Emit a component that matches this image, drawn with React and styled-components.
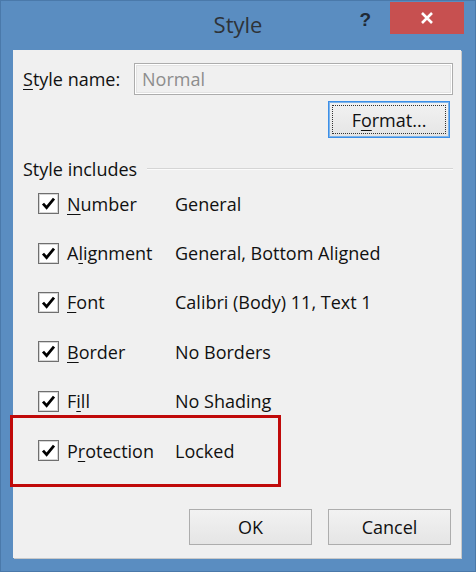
import React from "react";
import styled, { createGlobalStyle } from "styled-components";

const Global = createGlobalStyle`
  html, body { margin: 0; padding: 0; background: #5b8ec2; }
  body { font-family: "Open Sans", "Noto Sans", sans-serif; }
`;

const Window = styled.div`
  position: relative;
  width: 476px;
  height: 572px;
  box-sizing: border-box;
  background: #5a8dc1;
  border: 1px solid #4a79aa;
  display: flex;
  flex-direction: column;
`;

const TitleBar = styled.div`
  height: 49px;
  display: grid;
  grid-template-columns: 1fr auto 1fr;
  align-items: start;
`;

const Title = styled.div`
  grid-column: 2;
  margin-top: 8px;
  font-size: 22px;
  color: #2e3338;
  line-height: 30px;
`;

const Controls = styled.div`
  grid-column: 3;
  display: flex;
  justify-content: flex-end;
  align-items: flex-start;
  padding-right: 11px;
`;

const Help = styled.div`
  font-family: "Liberation Sans", Arial, sans-serif;
  font-weight: bold;
  font-size: 19px;
  color: #1f2a36;
  margin-top: 8px;
  margin-right: 19px;
`;

const Close = styled.div`
  width: 74px;
  height: 32px;
  margin-top: 1px;
  background: #c75050;
  display: flex;
  align-items: center;
  justify-content: center;
`;

const Client = styled.div`
  flex: 1;
  margin: 0 14px 13px 12px;
  background: #f0f0f0;
  box-shadow: 1px 1px 0 #c9c9c9;
  display: flex;
  flex-direction: column;
  padding: 13px 8px 0 10px;
  font-size: 18px;
  line-height: 24px;
  color: #111;
`;

const NameRow = styled.div`
  display: flex;
  align-items: center;
  gap: 15px;
`;

const Label = styled.span`
  width: 96px;
  white-space: nowrap;
`;

const Mn = styled.span`
  text-decoration: underline;
  text-underline-offset: 3px;
`;

const Input = styled.div`
  flex: 1;
  height: 32px;
  box-sizing: border-box;
  border: 1px solid #acacac;
  box-shadow: inset 0 0 0 1px #ffffff, inset 0 0 0 2px #e3e3e3;
  background: #f0f0f0;
  display: flex;
  align-items: center;
  padding-left: 7px;
  color: #8d8d8d;
`;

const FormatRow = styled.div`
  display: flex;
  justify-content: flex-end;
  margin-top: 6px;
  padding-right: 3px;
`;

const Button = styled.div`
  width: ${(p) => p.$w}px;
  height: ${(p) => p.$h}px;
  box-sizing: border-box;
  border: 1px solid ${(p) => (p.$focus ? "#3c8fe8" : "#adadad")};
  box-shadow: ${(p) => (p.$focus ? "inset 0 0 0 1px #7eb4ea" : "none")};
  background: linear-gradient(#f2f2f2, #e5e5e5);
  display: flex;
  align-items: center;
  justify-content: center;
  padding: 3px;
`;

const FocusRect = styled.div`
  flex: 1;
  align-self: stretch;
  border: 1px dotted #333;
  display: flex;
  align-items: center;
  justify-content: center;
`;

const Section = styled.div`
  display: flex;
  align-items: center;
  gap: 10px;
  margin-top: 19px;
  height: 24px;
`;

const Rule = styled.div`
  flex: 1;
  height: 1px;
  background: #d5d5d5;
  border-bottom: 1px solid #fbfbfb;
`;

const List = styled.div`
  display: grid;
  grid-auto-rows: 49.4px;
  padding-left: 15px;
  margin-top: -2px;
`;

const Item = styled.div`
  display: grid;
  grid-template-columns: 21px 100px auto;
  column-gap: 8px;
  align-items: center;
`;

const Box = styled.div`
  width: 21px;
  height: 21px;
  box-sizing: border-box;
  border: 1px solid #6f6f6f;
  box-shadow: inset 0 0 0 1px #d6d6d6;
  background: #fff;
  display: flex;
  align-items: center;
  justify-content: center;
`;

const Footer = styled.div`
  margin-top: auto;
  display: flex;
  justify-content: flex-end;
  gap: 16px;
  padding: 0 2px 13px 0;
`;

const Highlight = styled.div`
  position: absolute;
  left: 9px;
  top: 414px;
  width: 271px;
  height: 72px;
  box-sizing: border-box;
  border: 3px solid #c00a0a;
  pointer-events: none;
`;

const rows = [
  { pre: "", mn: "N", post: "umber", value: "General" },
  { pre: "A", mn: "l", post: "ignment", value: "General, Bottom Aligned" },
  { pre: "", mn: "F", post: "ont", value: "Calibri (Body) 11, Text 1" },
  { pre: "", mn: "B", post: "order", value: "No Borders" },
  { pre: "F", mn: "i", post: "ll", value: "No Shading" },
  { pre: "P", mn: "r", post: "otection", value: "Locked" },
];

const Check = () => (
  <svg width="15" height="15" viewBox="0 0 15 15">
    <path d="M2 7.6 L5.6 11.6 L13 2.6" fill="none" stroke="#000" strokeWidth="2.8" strokeLinejoin="miter" />
  </svg>
);

export default function App() {
  return (
    <>
      <Global />
      <Window>
        <TitleBar>
          <Title>Style</Title>
          <Controls>
            <Help>?</Help>
            <Close>
              <svg width="14" height="14" viewBox="0 0 14 14">
                <path d="M2 2 L12 12 M12 2 L2 12" stroke="#fff" strokeWidth="2.6" />
              </svg>
            </Close>
          </Controls>
        </TitleBar>
        <Client>
          <NameRow>
            <Label>
              <Mn>S</Mn>tyle name:
            </Label>
            <Input>Normal</Input>
          </NameRow>
          <FormatRow>
            <Button $w={122} $h={37} $focus>
              <FocusRect>
                F<Mn>o</Mn>rmat...
              </FocusRect>
            </Button>
          </FormatRow>
          <Section>
            <span>Style includes</span>
            <Rule />
          </Section>
          <List>
            {rows.map((r) => (
              <Item key={r.value}>
                <Box>
                  <Check />
                </Box>
                <span>
                  {r.pre}
                  <Mn>{r.mn}</Mn>
                  {r.post}
                </span>
                <span>{r.value}</span>
              </Item>
            ))}
          </List>
          <Footer>
            <Button $w={123} $h={36}>OK</Button>
            <Button $w={123} $h={36}>Cancel</Button>
          </Footer>
        </Client>
        <Highlight />
      </Window>
    </>
  );
}
